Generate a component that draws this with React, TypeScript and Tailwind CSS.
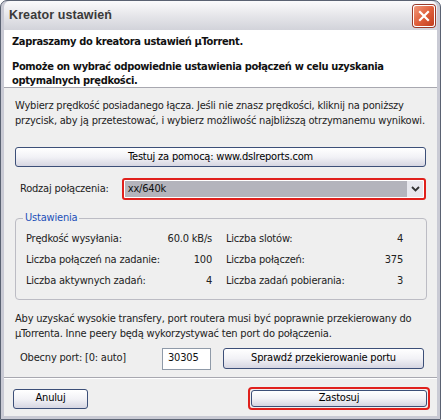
import React from 'react'

const font = "font-['DejaVu_Sans_Condensed','DejaVu_Sans',sans-serif]"

function XpButton({ children, className = '' }: { children: React.ReactNode; className?: string }) {
  return (
    <div
      className={`flex items-center justify-center rounded-[3px] border border-[#3c4f78] bg-gradient-to-b from-white via-[#f2f2f6] to-[#d6d6e2] text-black ${className}`}
    >
      {children}
    </div>
  )
}

function Row({ label, value }: { label: string; value: string }) {
  return (
    <div className="flex h-[21px] items-center justify-between">
      <span>{label}</span>
      <span>{value}</span>
    </div>
  )
}

export default function App() {
  return (
    <div className={`${font} h-[420px] w-[441px] bg-white text-[11px] tracking-[-0.2px] text-[#111]`}>
      <div className="flex h-[420px] flex-col rounded-t-[7px] border border-[#5a6272] bg-[#c9cad4] px-[3px] pb-[3px]">
        {/* Title bar */}
        <div className="flex h-[29px] shrink-0 items-center justify-between rounded-t-[6px] bg-gradient-to-b from-[#fbfbfc] via-[#e6e6ea] to-[#d2d3da] pl-[5px] pr-[2px]">
          <span className="font-['Liberation_Sans',sans-serif] text-[12.5px] font-bold tracking-[0.1px] text-[#3a3a3a]">Kreator ustawień</span>
          <div className="flex h-[22px] w-[22px] items-center justify-center rounded-[3px] border border-white bg-gradient-to-br from-[#f0987a] via-[#e0603c] to-[#c23d1c] shadow-[0_0_0_1px_#9a3a2a]">
            <svg width="12" height="12" viewBox="0 0 12 12">
              <path d="M2 2 L10 10 M10 2 L2 10" stroke="white" strokeWidth="2.2" strokeLinecap="square" />
            </svg>
          </div>
        </div>

        {/* Header */}
        <div className="h-[58px] shrink-0 border-b border-[#a8a8b0] bg-white px-[8px] pt-[5px] font-bold leading-[14px] tracking-[-0.35px] text-[#111]">
          <p>Zapraszamy do kreatora ustawień µTorrent.</p>
          <p className="mt-[11px]">Pomoże on wybrać odpowiednie ustawienia połączeń w celu uzyskania optymalnych prędkości.</p>
        </div>

        {/* Body */}
        <div className="flex flex-1 flex-col bg-[#efefef] px-[11px] text-[#222]">
          <p className="mt-[10px] leading-[15px]">
            Wybierz prędkość posiadanego łącza. Jeśli nie znasz prędkości, kliknij na poniższy przycisk, aby ją przetestować, i wybierz możliwość najbliższą otrzymanemu wynikowi.
          </p>

          <XpButton className="mt-[19px] h-[20px] w-[411px]">Testuj za pomocą: www.dslreports.com</XpButton>

          <div className="mt-[11px] flex h-[22px] items-center">
            <span className="w-[107px] pl-[5px]">Rodzaj połączenia:</span>
            <div className="flex h-[22px] w-[305px] items-center rounded-[3px] border-[2px] border-[#e0201c] bg-white p-[1px]">
              <div className="flex h-full flex-1 items-center bg-[#b4b4bc] pl-[3px] text-[#111]">xx/640k</div>
              <div className="flex h-full w-[16px] items-center justify-center bg-[#e8e8ee]">
                <svg width="9" height="6" viewBox="0 0 9 6">
                  <path d="M1 1 L4.5 4.5 L8 1" fill="none" stroke="#333" strokeWidth="1.8" />
                </svg>
              </div>
            </div>
          </div>

          {/* Group box */}
          <div className="relative mt-[18px] h-[82px] w-[412px] shrink-0 rounded-[4px] border border-[#bcbcc4] pl-[10px] pt-[10px]">
            <span className="absolute -top-[8px] left-[7px] bg-[#efefef] px-[2px] leading-[14px] text-[#2250b8]">Ustawienia</span>
            <div className="grid grid-cols-[186px_177px] gap-x-[14px]">
              <Row label="Prędkość wysyłania:" value="60.0 kB/s" />
              <Row label="Liczba slotów:" value="4" />
              <Row label="Liczba połączeń na zadanie:" value="100" />
              <Row label="Liczba połączeń:" value="375" />
              <Row label="Liczba aktywnych zadań:" value="4" />
              <Row label="Liczba zadań pobierania:" value="3" />
            </div>
          </div>

          <p className="mt-[11px] leading-[15px]">
            Aby uzyskać wysokie transfery, port routera musi być poprawnie przekierowany do µTorrenta. Inne peery będą wykorzystywać ten port do połączenia.
          </p>

          <div className="mt-[6px] flex h-[23px] items-center">
            <span className="w-[147px] pl-[5px]">Obecny port: [0: auto]</span>
            <div className="flex h-[22px] w-[49px] items-center border border-[#8f9aa8] bg-white pl-[5px] text-[#111]">30305</div>
            <XpButton className="ml-[12px] h-[21px] w-[201px]">Sprawdź przekierowanie portu</XpButton>
          </div>

          <div className="-mx-[11px] mt-[7px] border-t border-[#a8a8b0] border-b border-b-white" />

          <div className="mt-[8px] flex items-center justify-between">
            <XpButton className="-ml-[2px] h-[20px] w-[75px]">Anuluj</XpButton>
            <div className="-mr-[4px] rounded-[4px] border-[2px] border-[#e0201c] p-[1px]">
              <XpButton className="h-[17px] w-[176px]">Zastosuj</XpButton>
            </div>
          </div>
        </div>
      </div>
    </div>
  )
}
